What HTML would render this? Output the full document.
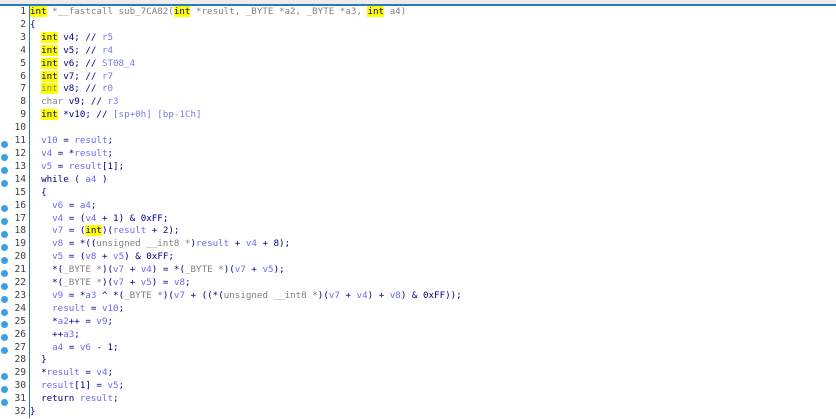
<!DOCTYPE html>
<html><head><style>
html,body{margin:0;padding:0;width:836px;height:418px;overflow:hidden;background:#fff;}
#bar{position:absolute;left:0;top:0;width:836px;height:4px;background:#ececec;}
#bl{position:absolute;left:0;top:4px;width:836px;height:2px;background:#2b7bbb;}
#vl{position:absolute;left:29px;top:6px;width:1px;height:412px;background:#2b7bbb;}
pre{margin:0;position:absolute;top:6px;font-family:"DejaVu Sans Mono","Liberation Mono",monospace;font-size:9.2px;line-height:12.9px;}
#num{left:0;width:26px;text-align:right;color:#404040;font-size:9.6px;}
#code{left:30px;color:#000080;}
.d{position:absolute;left:1px;width:7px;height:7px;border-radius:50%;background:#3da0e6;}
.g{color:#808080}.v{color:#6b6bf0}.c{color:#7a7ae8}
.y{background:#ffff00}
.k{color:#000080}
</style></head><body>
<div id="bar"></div><div id="bl"></div><div id="vl"></div>
<pre id="num">1
2
3
4
5
6
7
8
9
10
11
12
13
14
15
16
17
18
19
20
21
22
23
24
25
26
27
28
29
30
31
32</pre>
<div class="d" style="top:141px"></div><div class="d" style="top:154px"></div><div class="d" style="top:167px"></div><div class="d" style="top:180px"></div>
<div class="d" style="top:205px"></div><div class="d" style="top:218px"></div><div class="d" style="top:231px"></div><div class="d" style="top:244px"></div><div class="d" style="top:257px"></div><div class="d" style="top:270px"></div><div class="d" style="top:283px"></div><div class="d" style="top:296px"></div><div class="d" style="top:309px"></div><div class="d" style="top:321px"></div><div class="d" style="top:334px"></div><div class="d" style="top:347px"></div>
<div class="d" style="top:373px"></div><div class="d" style="top:386px"></div><div class="d" style="top:399px"></div>
<pre id="code"><span class="y">int</span><span class="g"> *__fastcall sub_7CA82(</span><span class="y">int</span><span class="g"> *result, _BYTE *a2, _BYTE *a3, </span><span class="y">int</span><span class="g"> a4)</span>
{
  <span class="y">int</span> v4; // <span class="c">r5</span>
  <span class="y">int</span> v5; // <span class="c">r4</span>
  <span class="y">int</span> v6; // <span class="c">ST08_4</span>
  <span class="y">int</span> v7; // <span class="c">r7</span>
  <span class="y g">int</span> v8; // <span class="c">r0</span>
  <span class="g">char</span> v9; // <span class="c">r3</span>
  <span class="y">int</span> *v10; // <span class="c">[sp+0h] [bp-1Ch]</span>

  <span class="v">v10</span> = <span class="v">result</span>;
  <span class="v">v4</span> = *<span class="v">result</span>;
  <span class="v">v5</span> = <span class="v">result</span>[1];
  while ( <span class="v">a4</span> )
  {
    <span class="v">v6</span> = <span class="v">a4</span>;
    <span class="v">v4</span> = (<span class="v">v4</span> + 1) &amp; 0xFF;
    <span class="v">v7</span> = (<span class="y">int</span>)(<span class="v">result</span> + 2);
    <span class="v">v8</span> = *((<span class="g">unsigned __int8 *</span>)<span class="v">result</span> + <span class="v">v4</span> + 8);
    <span class="v">v5</span> = (<span class="v">v8</span> + <span class="v">v5</span>) &amp; 0xFF;
    *(<span class="g">_BYTE *</span>)(<span class="v">v7</span> + <span class="v">v4</span>) = *(<span class="g">_BYTE *</span>)(<span class="v">v7</span> + <span class="v">v5</span>);
    *(<span class="g">_BYTE *</span>)(<span class="v">v7</span> + <span class="v">v5</span>) = <span class="v">v8</span>;
    <span class="v">v9</span> = *<span class="v">a3</span> ^ *(<span class="g">_BYTE *</span>)(<span class="v">v7</span> + ((*(<span class="g">unsigned __int8 *</span>)(<span class="v">v7</span> + <span class="v">v4</span>) + <span class="v">v8</span>) &amp; 0xFF));
    <span class="v">result</span> = <span class="v">v10</span>;
    *<span class="v">a2</span>++ = <span class="v">v9</span>;
    ++<span class="v">a3</span>;
    <span class="v">a4</span> = <span class="v">v6</span> - 1;
  }
  *<span class="v">result</span> = <span class="v">v4</span>;
  <span class="v">result</span>[1] = <span class="v">v5</span>;
  return <span class="v">result</span>;
}</pre>
</body></html>
